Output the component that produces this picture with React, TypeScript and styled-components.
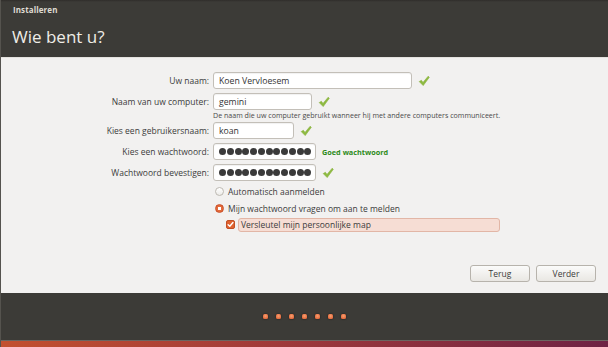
import React from "react";
import styled, { createGlobalStyle } from "styled-components";

const Global = createGlobalStyle`
  html, body { margin: 0; padding: 0; background: #3c3b37; }
  body { font-family: "Open Sans", "Noto Sans", "DejaVu Sans", sans-serif; }
  #root { width: 608px; height: 347px; overflow: hidden; }
`;

const Window = styled.div`
  width: 608px;
  height: 347px;
  display: flex;
  flex-direction: column;
  background: #3c3b37;
  border-left: 1px solid #55534e;
  box-sizing: border-box;
`;

const TitleBar = styled.div`
  height: 18px;
  display: flex;
  align-items: center;
  padding-left: 12px;
  background: linear-gradient(#2f2d2a 0px, #3c3b37 2px);
  color: #dfdbd2;
  font-size: 8px;
  font-weight: 700;
  letter-spacing: 0.1px;
`;

const Header = styled.div`
  height: 39px;
  display: flex;
  align-items: center;
  padding-left: 11px;
  color: #efede7;
  font-size: 17px;
  padding-bottom: 3px;
  box-sizing: border-box;
`;

const Panel = styled.div`
  height: 236px;
  background: #f2f1f0;
  border-top: 1px solid #e4e2de;
  box-sizing: border-box;
  display: flex;
  flex-direction: column;
`;

const Form = styled.div`
  display: grid;
  grid-template-columns: 208px 1fr;
  column-gap: 4px;
  padding-top: 12px;
  align-items: center;
  font-size: 8.5px;
  color: #3c3c3c;
`;

const Label = styled.div`
  text-align: right;
  height: 21px;
  line-height: 21px;
  white-space: nowrap;
`;

const Field = styled.div`
  display: flex;
  align-items: center;
  gap: 6px;
  height: 21px;
`;

const Input = styled.div<{ $w: number }>`
  width: ${(p) => p.$w}px;
  height: 17px;
  box-sizing: border-box;
  border: 1px solid #c3bfb8;
  border-radius: 3px;
  background: #fff;
  box-shadow: inset 0 1px 1px rgba(0, 0, 0, 0.06);
  padding-left: 5px;
  display: flex;
  align-items: center;
  font-size: 8.7px;
  color: #333;
  flex: none;
`;

const Mask = styled.span`
  display: flex;
  gap: 0.75px;
`;

const MaskDot = styled.span`
  width: 7px;
  height: 7px;
  border-radius: 50%;
  background: #3a3a3a;
`;

const Hint = styled.div`
  grid-column: 2;
  font-size: 7.1px;
  color: #4a4a4a;
  height: 11px;
  line-height: 11px;
  margin-top: -2px;
  margin-bottom: -1px;
  white-space: nowrap;
`;

const Strength = styled.span`
  color: #2e8b1a;
  font-weight: 700;
  font-size: 7.3px;
`;

const Options = styled.div`
  grid-column: 2;
  display: flex;
  flex-direction: column;
`;

const OptionRow = styled.div<{ $indent?: number }>`
  display: flex;
  align-items: center;
  gap: 4px;
  height: 16.7px;
  padding-left: ${(p) => p.$indent ?? 2}px;
`;

const Radio = styled.span<{ $on?: boolean }>`
  width: 9px;
  height: 9px;
  border-radius: 50%;
  box-sizing: border-box;
  border: 1px solid ${(p) => (p.$on ? "#c9502a" : "#bdb9b2")};
  background: ${(p) => (p.$on ? "radial-gradient(circle, #fff 0 1.6px, #e46a3a 2px)" : "linear-gradient(#fff, #ecebe8)")};
  flex: none;
`;

const Check = styled.span`
  width: 9px;
  height: 9px;
  border-radius: 2px;
  background: #e0622f;
  border: 1px solid #c24f25;
  box-sizing: border-box;
  display: flex;
  align-items: center;
  justify-content: center;
  flex: none;
`;

const FocusBox = styled.div`
  width: 262px;
  height: 14px;
  box-sizing: border-box;
  border: 1px solid #e2b6a6;
  border-radius: 3px;
  background: #f6ddd4;
  display: flex;
  align-items: center;
  padding-left: 2px;
  margin-left: -1px;
`;

const ButtonBar = styled.div`
  margin-top: auto;
  display: flex;
  justify-content: flex-end;
  gap: 6px;
  padding: 0 12px 11px 0;
`;

const Button = styled.button`
  width: 60px;
  height: 17px;
  box-sizing: border-box;
  border: 1px solid #b7b3ac;
  border-radius: 3px;
  background: linear-gradient(#fbfbfa, #e9e7e3);
  font-family: inherit;
  font-size: 8.5px;
  color: #3c3c3c;
  padding: 0;
`;

const Footer = styled.div`
  flex: 1;
  display: flex;
  flex-direction: column;
`;

const Progress = styled.div`
  flex: 1;
  display: flex;
  justify-content: center;
  align-items: center;
  gap: 8px;
`;

const Dot = styled.span`
  width: 5px;
  height: 5px;
  border-radius: 1.5px;
  background: radial-gradient(circle at 50% 40%, #f7a070, #d9552a);
  box-shadow: 0 0 2px rgba(0, 0, 0, 0.6);
`;

const Wallpaper = styled.div`
  height: 6px;
  border-top: 1px solid #6a6660;
  background: linear-gradient(90deg, #c2502f, #a03a3a 45%, #6e2244);
`;

const Tick = () => (
  <svg width="12" height="12" viewBox="0 0 12 12">
    <path d="M1.2 6.6 L3.4 5.3 L5 7.4 L10.2 1.2 L11.3 2.3 L5.2 10.6 Z" fill="#8dba3f" stroke="#86b03a" strokeWidth="0.6" strokeLinejoin="round" />
  </svg>
);

const SmallTick = () => (
  <svg width="7" height="7" viewBox="0 0 8 8">
    <path d="M1.3 4.2 L3.2 6 L6.8 1.8" fill="none" stroke="#fff" strokeWidth="1.6" strokeLinecap="round" strokeLinejoin="round" />
  </svg>
);

const Password = () => (
  <Mask aria-label="wachtwoord">
    {Array.from({ length: 12 }).map((_, i) => (
      <MaskDot key={i} />
    ))}
  </Mask>
);

export default function App() {
  return (
    <>
      <Global />
      <Window>
        <TitleBar>Installeren</TitleBar>
        <Header>Wie bent u?</Header>
        <Panel>
          <Form>
            <Label>Uw naam:</Label>
            <Field>
              <Input $w={199}>Koen Vervloesem</Input>
              <Tick />
            </Field>
            <Label>Naam van uw computer:</Label>
            <Field>
              <Input $w={99}>gemini</Input>
              <Tick />
            </Field>
            <Hint>De naam die uw computer gebruikt wanneer hij met andere computers communiceert.</Hint>
            <Label>Kies een gebruikersnaam:</Label>
            <Field>
              <Input $w={81}>koan</Input>
              <Tick />
            </Field>
            <Label>Kies een wachtwoord:</Label>
            <Field>
              <Input $w={103}><Password /></Input>
              <Strength>Goed wachtwoord</Strength>
            </Field>
            <Label>Wachtwoord bevestigen:</Label>
            <Field>
              <Input $w={103}><Password /></Input>
              <Tick />
            </Field>
            <Options>
              <OptionRow>
                <Radio />
                <span>Automatisch aanmelden</span>
              </OptionRow>
              <OptionRow>
                <Radio $on />
                <span>Mijn wachtwoord vragen om aan te melden</span>
              </OptionRow>
              <OptionRow $indent={13}>
                <Check><SmallTick /></Check>
                <FocusBox>Versleutel mijn persoonlijke map</FocusBox>
              </OptionRow>
            </Options>
          </Form>
          <ButtonBar>
            <Button>Terug</Button>
            <Button>Verder</Button>
          </ButtonBar>
        </Panel>
        <Footer>
          <Progress>
            {Array.from({ length: 7 }).map((_, i) => (
              <Dot key={i} />
            ))}
          </Progress>
          <Wallpaper />
        </Footer>
      </Window>
    </>
  );
}
